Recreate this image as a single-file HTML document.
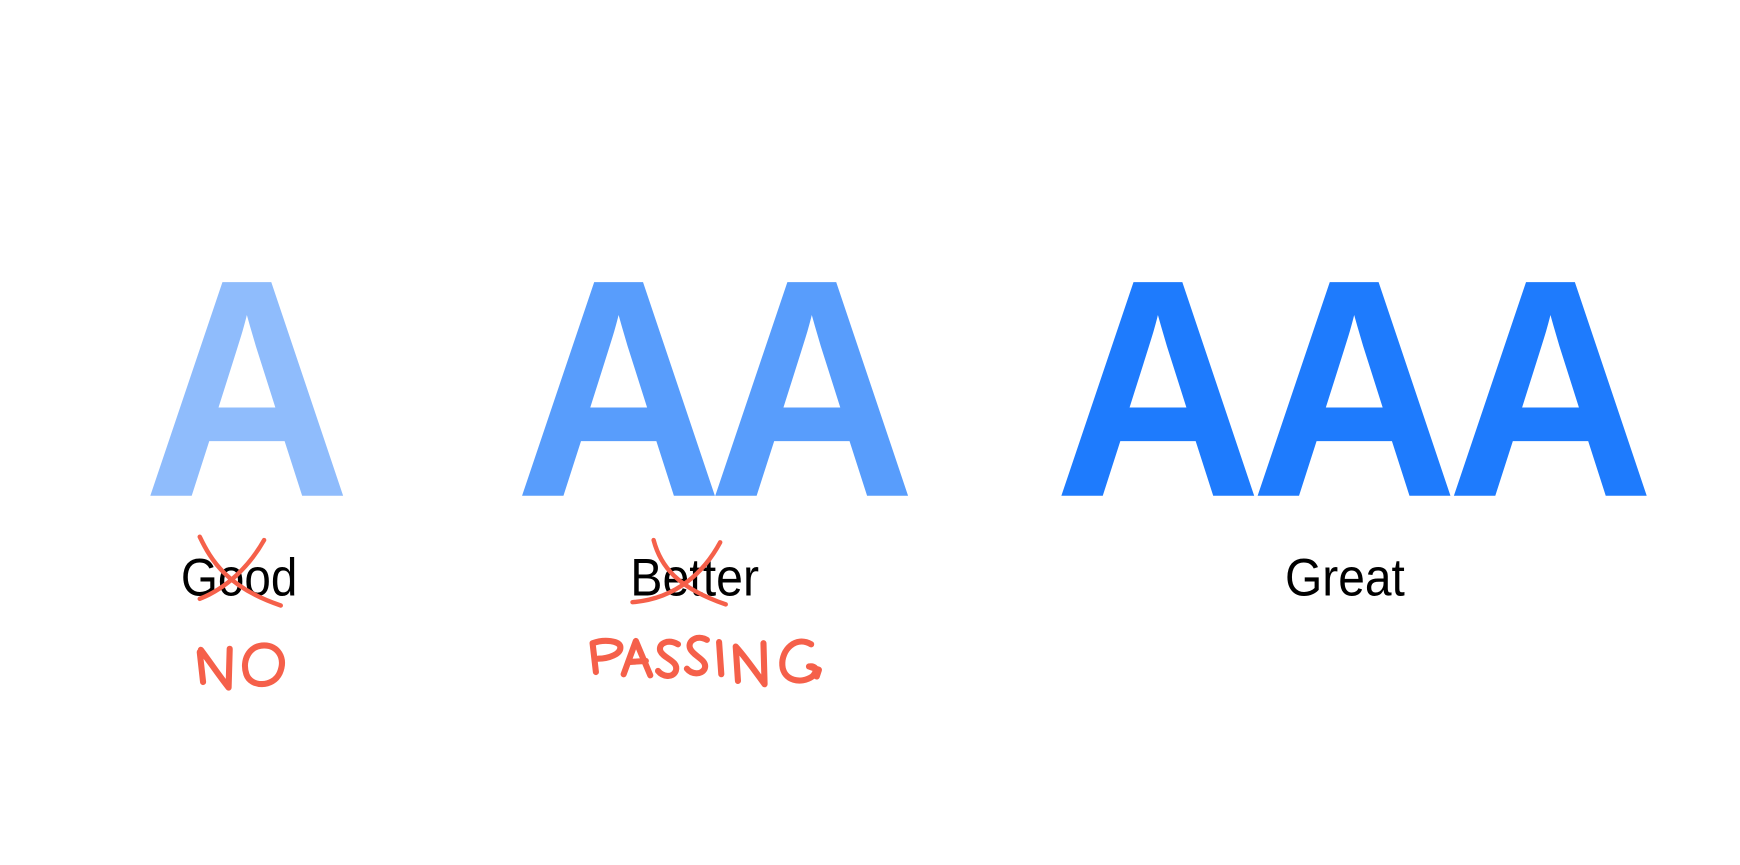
<!DOCTYPE html>
<html><head><meta charset="utf-8"><style>
html,body{margin:0;padding:0;background:#fff;width:1740px;height:865px;overflow:hidden}
svg{display:block}
</style></head><body>
<svg width="1740" height="865" viewBox="0 0 1568 780" preserveAspectRatio="none">
<g font-family="Liberation Sans, Arial, sans-serif" font-weight="bold" font-size="280">
<text transform="translate(129,447) scale(0.925,1)" x="0" y="0" fill="#8fbcfc">A</text>
<text transform="translate(464,447) scale(0.925,1)" x="0" y="0" fill="#589dfc" letter-spacing="-14">AA</text>
<text transform="translate(950,447) scale(0.925,1)" x="0" y="0" fill="#1e7bfd" letter-spacing="-11">AAA</text>
</g>
<g font-family="Liberation Sans, Arial, sans-serif" font-size="48" fill="#000">
<text x="163" y="537" textLength="105" lengthAdjust="spacingAndGlyphs">Good</text>
<text x="568" y="537" textLength="116" lengthAdjust="spacingAndGlyphs">Better</text>
<text x="1158" y="537" textLength="108" lengthAdjust="spacingAndGlyphs">Great</text>
</g>
<g fill="none" stroke="#f5604a" stroke-width="4" stroke-linecap="round" stroke-linejoin="round">
<path d="M180 484 C190 505 205 530 253 546"/>
<path d="M238 487 C225 510 205 530 180 540"/>
<path d="M589 487 C595 510 610 530 654 545"/>
<path d="M649 489 C635 515 610 540 570 543"/>
</g>
<g fill="none" stroke="#f5604a" stroke-width="5.5" stroke-linecap="round" stroke-linejoin="round">
<path d="M180 588 L183 615 M181 586 C190 598 198 610 206 620 M206 620 L207 585"/>
<path d="M238 582 C224 582 218 596 222 608 C226 620 246 620 252 607 C258 593 250 582 238 582"/>
<path d="M537 606 L534 580 C545 576 558 578 559 583 C560 590 548 594 539 594"/>
<path d="M562 608 L573 578 L586 609 M566 597 L582 596"/>
<path d="M611 581 C602 576 593 580 595 587 C598 594 612 596 609 605 C606 612 597 610 593 605"/>
<path d="M637 577 C628 572 619 578 622 585 C625 592 638 595 635 603 C632 609 623 608 619 603"/>
<path d="M648 579 L650 608"/>
<path d="M665 614 L663 583 C672 593 681 606 689 617 L688 580"/>
<path d="M731 581 C717 573 704 586 705 600 C706 614 722 617 732 610 C737 605 736 600 729 601 M729 601 L738 604 L736 610"/>
</g>
</svg>
</body></html>
